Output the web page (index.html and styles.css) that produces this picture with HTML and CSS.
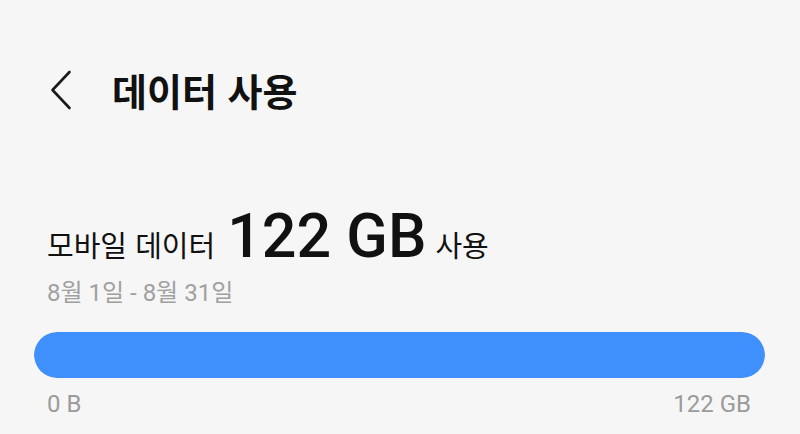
FILE: index.html
```html
<!DOCTYPE html>
<html lang="ko">
<head>
<meta charset="utf-8">
<link rel="stylesheet" href="styles.css">
</head>
<body>
<div class="page">
  <header class="header">
    <svg class="back" width="22" height="40" viewBox="0 0 22 40" aria-hidden="true">
      <path d="M19.5 2 L2.5 20 L19.5 38" fill="none" stroke="#1a1a1a" stroke-width="2.6" stroke-linecap="round" stroke-linejoin="round"/>
    </svg>
    <h1 class="title">데이터 사용</h1>
  </header>
  <section class="summary">
    <div class="usage">
      <span class="label">모바일 데이터</span>
      <span class="amount">122 GB</span>
      <span class="suffix">사용</span>
    </div>
    <div class="period">8월 1일 - 8월 31일</div>
  </section>
  <div class="bar"><div class="fill" style="width:100%"></div></div>
  <div class="scale">
    <span>0 B</span>
    <span>122 GB</span>
  </div>
</div>
</body>
</html>
```
FILE: styles.css
```css
html, body {
  margin: 0;
  padding: 0;
  background: #f6f6f6;
}
body {
  font-family: Roboto, "Noto Sans CJK KR", sans-serif;
  color: #111;
}
.page {
  padding: 0 35px 0 34px;
  display: flex;
  flex-direction: column;
}
.header {
  display: flex;
  align-items: center;
  height: 50px;
  margin-top: 65px;
}
.back {
  margin-left: 16px;
  flex: none;
}
.title {
  margin: 0 0 0 40px;
  font-family: "Noto Sans CJK KR", sans-serif;
  font-weight: 700;
  font-size: 38px;
  line-height: 50px;
  color: #111;
}
.summary {
  margin-top: 89px;
  padding-left: 13px;
}
.usage {
  display: flex;
  align-items: baseline;
  height: 64px;
}
.label {
  font-family: "Noto Sans CJK KR", sans-serif;
  font-size: 29px;
  line-height: 40px;
}
.amount {
  font-family: Roboto, sans-serif;
  font-weight: 500;
  font-size: 61px;
  line-height: 64px;
  margin-left: 12px;
  margin-right: 9px;
}
.suffix {
  font-family: "Noto Sans CJK KR", sans-serif;
  font-size: 29px;
  line-height: 40px;
}
.period {
  margin-top: 10px;
  font-family: Roboto, "Noto Sans CJK KR", sans-serif;
  font-size: 24px;
  line-height: 30px;
  color: #a0a0a0;
}
.bar {
  margin-top: 24px;
  height: 46px;
  border-radius: 23px;
  background: #dcdcdc;
  overflow: hidden;
}
.fill {
  height: 100%;
  background: #3f8ffd;
  border-radius: 23px;
}
.scale {
  display: flex;
  justify-content: space-between;
  padding: 0 14px 0 13px;
  margin-top: 11px;
  font-family: Roboto, sans-serif;
  font-size: 24px;
  line-height: 30px;
  color: #9b9b9b;
}
```
